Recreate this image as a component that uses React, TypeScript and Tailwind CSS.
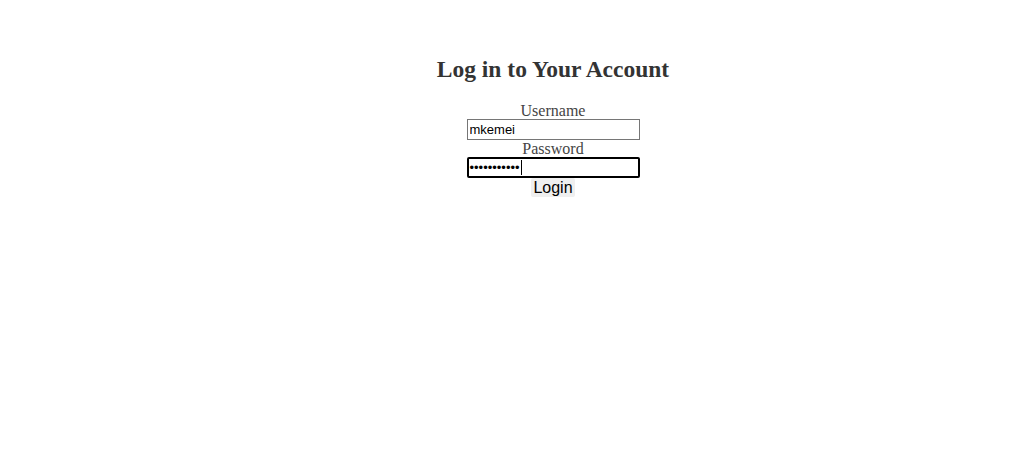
import React from "react";

export default function App() {
  return (
    <div className="min-h-[456px] w-full bg-white text-[#333] font-['Liberation_Serif',serif]">
      <div className="flex flex-col items-center pt-[53px] pl-[82px]">
        <h2 className="text-[23.5px] font-bold leading-[32px] text-[#333]">Log in to Your Account</h2>
        <form className="mt-[17px] flex flex-col items-center" onSubmit={(e) => e.preventDefault()}>
          <label className="text-[16px] leading-[17px] text-[#444]">Username</label>
          <input
            defaultValue="mkemei"
            className="h-[21px] w-[173px] border border-[#767676] px-[2px] text-[13px] text-black font-['Liberation_Sans',sans-serif] outline-none"
          />
          <label className="text-[16px] leading-[17px] text-[#444]">Password</label>
          <div className="relative h-[21px] w-[173px] rounded-[2px] border-2 border-black bg-white px-[1px] flex items-center">
            <span className="text-[13px] leading-none text-black font-['Liberation_Sans',sans-serif]">•••••••••••</span>
            <span className="ml-[1px] h-[15px] w-[1px] bg-black" />
          </div>
          <button className="h-[19px] rounded-[2px] bg-[#efefef] px-[2px] text-[16px] leading-[19px] text-black font-['Liberation_Sans',sans-serif]">
            Login
          </button>
        </form>
      </div>
    </div>
  );
}
